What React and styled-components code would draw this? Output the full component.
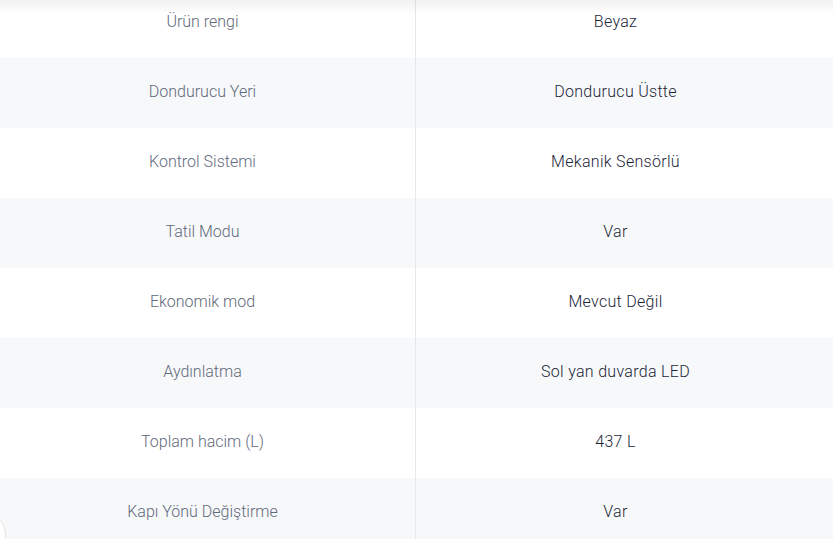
import React from 'react'
import styled, { createGlobalStyle } from "styled-components";

const Global = createGlobalStyle`
  html, body {
    margin: 0;
    padding: 0;
    background: #fff;
    overflow: hidden;
  }
  body {
    font-family: Roboto, "Noto Sans", Arial, sans-serif;
  }
`;

const Page = styled.div`
  position: relative;
  height: 539px;
  overflow: hidden;
`;

const TopShade = styled.div`
  position: absolute;
  top: 0;
  left: 0;
  right: 0;
  height: 14px;
  background: linear-gradient(to bottom, rgba(0,0,0,0.06), rgba(0,0,0,0));
  pointer-events: none;
`;

const Table = styled.div`
  margin-top: -12px;
`;

const Row = styled.div`
  display: grid;
  grid-template-columns: 416px 1fr;
  height: 70px;
  background: ${p => (p.$alt ? "#f7f8fa" : "#fff")};
`;

const Label = styled.div`
  display: flex;
  align-items: center;
  justify-content: center;
  padding: 0 10px 3px 0;
  border-right: 1px solid #e6e7e9;
  font-size: 16px;
  font-weight: 300;
  color: #5f6a7c;
`;

const Value = styled.div`
  display: flex;
  align-items: center;
  justify-content: center;
  padding: 0 18px 3px 0;
  font-size: 16px;
  font-weight: 300;
  letter-spacing: 0.3px;
  color: #1c2638;
`;

const Bubble = styled.div`
  position: absolute;
  left: -44px;
  top: 510px;
  width: 48px;
  height: 48px;
  border-radius: 50%;
  background: #fff;
  border: 1px solid #e3e4e6;
`;

const specs = [
  ["Ürün rengi", "Beyaz"],
  ["Dondurucu Yeri", "Dondurucu Üstte"],
  ["Kontrol Sistemi", "Mekanik Sensörlü"],
  ["Tatil Modu", "Var"],
  ["Ekonomik mod", "Mevcut Değil"],
  ["Aydınlatma", "Sol yan duvarda LED"],
  ["Toplam hacim (L)", "437 L"],
  ["Kapı Yönü Değiştirme", "Var"],
];

const App = () => {
  return (
    <Page>
      <Global />
      <Table>
        {specs.map(([k, v], i) => (
          <Row key={k} $alt={i % 2 === 1}>
            <Label>{k}</Label>
            <Value>{v}</Value>
          </Row>
        ))}
      </Table>
      <TopShade />
      <Bubble />
    </Page>
  )
}

export default App
